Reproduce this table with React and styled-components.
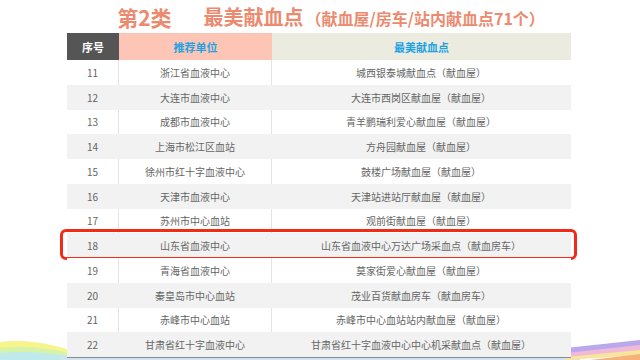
import styled, { createGlobalStyle } from "styled-components";

const rows = [
    ["11", "浙江省血液中心", "城西银泰城献血点（献血屋）"],
    ["12", "大连市血液中心", "大连市西岗区献血屋（献血屋）"],
    ["13", "成都市血液中心", "青羊鹏瑞利爱心献血屋（献血屋）"],
    ["14", "上海市松江区血站", "方舟园献血屋（献血屋）"],
    ["15", "徐州市红十字血液中心", "鼓楼广场献血屋（献血屋）"],
    ["16", "天津市血液中心", "天津站进站厅献血屋（献血屋）"],
    ["17", "苏州市中心血站", "观前街献血屋（献血屋）"],
    ["18", "山东省血液中心", "山东省血液中心万达广场采血点（献血房车）"],
    ["19", "青海省血液中心", "莫家街爱心献血屋（献血屋）"],
    ["20", "秦皇岛市中心血站", "茂业百货献血房车（献血房车）"],
    ["21", "赤峰市中心血站", "赤峰市中心血站站内献血屋（献血屋）"],
    ["22", "甘肃省红十字血液中心", "甘肃省红十字血液中心中心机采献血点（献血屋）"],
];

export default function App() {
    return (
        <>
            <GlobalStyle />
            <Page>
                <Decoration />
                <Title>
                    <Category>第2类</Category>
                    <Main>最美献血点</Main>
                    <Sub>（献血屋/房车/站内献血点71个）</Sub>
                </Title>
                <Table>
                    <HeadRow>
                        <HeadCell $bg="#555555" $color="#ffffff">序号</HeadCell>
                        <HeadCell $bg="#fcc5b5" $color="#1ea2e4">推荐单位</HeadCell>
                        <HeadCell $bg="#ecebdf" $color="#1ea2e4">最美献血点</HeadCell>
                    </HeadRow>
                    {rows.map(([no, unit, place], i) => (
                        <Row key={no} $striped={i % 2 === 1}>
                            <Cell $line>{no}</Cell>
                            <Cell $line>{unit}</Cell>
                            <Cell>{place}</Cell>
                            {no === "18" && <Highlight />}
                        </Row>
                    ))}
                </Table>
            </Page>
        </>
    );
}

function Decoration() {
    return (
        <DecoSvg viewBox="0 0 640 40" preserveAspectRatio="none">
            <path d="M0 22 C30 18 60 26 90 36 L90 40 L0 40 Z" fill="#f6f48a" />
            <path d="M0 28 C30 24 60 30 90 38 L90 40 L0 40 Z" fill="#d8f3a8" />
            <path d="M0 33 C30 30 60 34 90 40 L0 40 Z" fill="#bfe9ec" />
            <path d="M60 37 L580 37 L580 40 L60 40 Z" fill="#cfe3f4" />
            <path d="M566 28 L640 20 L640 26 L566 34 Z" fill="#b9a9ec" />
            <path d="M566 33 L640 25 L640 31 L566 38 Z" fill="#f2b8d8" />
            <path d="M566 37 L640 30 L640 35 L566 40 Z" fill="#f8e49a" />
            <path d="M590 40 L640 34 L640 40 Z" fill="#f5b27a" />
        </DecoSvg>
    );
}

const GlobalStyle = createGlobalStyle`
    body {
        margin: 0;
        background: #ffffff;
        font-family: "Noto Sans CJK SC", "Noto Sans", sans-serif;
    }
`;

const Page = styled.div`
    position: relative;
    width: 640px;
    height: 360px;
    overflow: hidden;
    background: #ffffff;
`;

const DecoSvg = styled.svg`
    position: absolute;
    left: 0;
    bottom: 0;
    width: 640px;
    height: 40px;
`;

const Title = styled.div`
    height: 33px;
    display: flex;
    align-items: center;
    justify-content: center;
    padding-left: 22px;
    color: #ec8a70;
    font-weight: 700;
    white-space: nowrap;
`;

const Category = styled.span`
    font-size: 21px;
    margin-right: 32px;
`;

const Main = styled.span`
    font-size: 20px;
`;

const Sub = styled.span`
    font-size: 16px;
    margin-top: 3px;
    margin-left: 2px;
`;

const Table = styled.div`
    position: relative;
    width: 504px;
    margin-left: 67px;
    border-bottom: 1.5px solid #8a8a8a;
`;

const HeadRow = styled.div`
    display: grid;
    grid-template-columns: 52px 153px 1fr;
    height: 27px;
`;

const HeadCell = styled.div`
    display: flex;
    align-items: center;
    justify-content: center;
    background: ${p => p.$bg};
    color: ${p => p.$color};
    font-size: 11px;
    font-weight: 700;
`;

const Row = styled.div`
    position: relative;
    display: grid;
    grid-template-columns: 52px 153px 1fr;
    height: 24.75px;
    background: ${p => (p.$striped ? "#f2f2f2" : "#ffffff")};
    --line: ${p => (p.$striped ? "transparent" : "#e4e4e4")};
`;

const Cell = styled.div`
    display: flex;
    align-items: center;
    justify-content: center;
    color: #666666;
    font-size: 10px;
    border-right: 1px solid ${p => (p.$line ? "var(--line)" : "transparent")};
`;

const Highlight = styled.div`
    position: absolute;
    top: -4px;
    bottom: -2px;
    left: -7px;
    right: -6px;
    border: 3px solid #f22a18;
    border-radius: 6px;
    pointer-events: none;
`;
